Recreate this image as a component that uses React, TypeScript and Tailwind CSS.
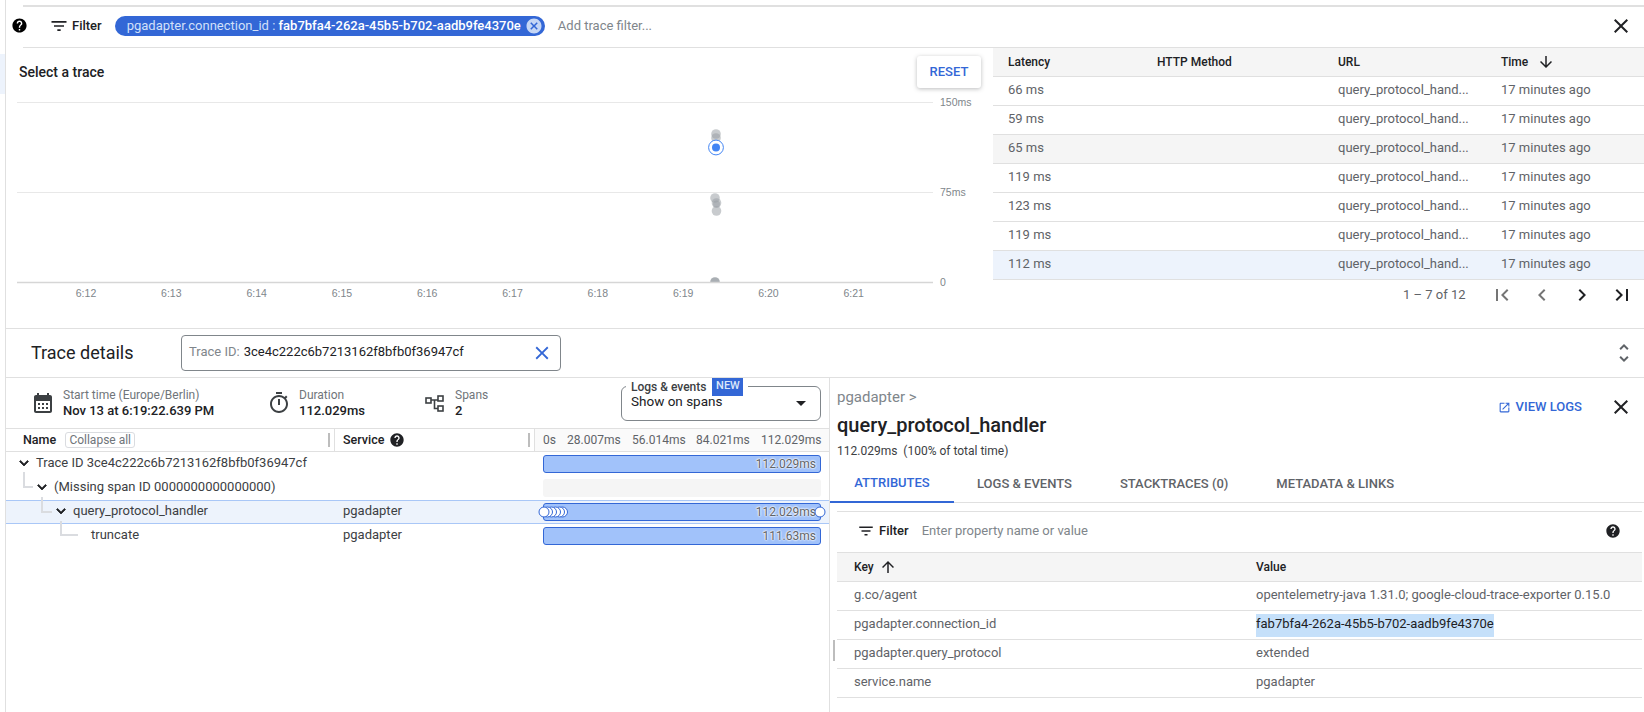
const paths = {
  help: 'M12 2C6.48 2 2 6.48 2 12s4.48 10 10 10 10-4.48 10-10S17.52 2 12 2zm1 17h-2v-2h2v2zm2.07-7.75l-.9.92C13.45 12.9 13 13.5 13 15h-2v-.5c0-1.1.45-2.1 1.17-2.83l1.24-1.26c.37-.36.59-.86.59-1.41 0-1.1-.9-2-2-2s-2 .9-2 2H8c0-2.21 1.79-4 4-4s4 1.79 4 4c0 .88-.36 1.68-.93 2.25z',
  filter: 'M10 18h4v-2h-4v2zM3 6v2h18V6H3zm3 7h12v-2H6v2z',
  close: 'M19 6.41L17.59 5 12 10.59 6.41 5 5 6.41 10.59 12 5 17.59 6.41 19 12 13.41 17.59 19 19 17.59 13.41 12z',
  cancel: 'M12 2C6.47 2 2 6.47 2 12s4.47 10 10 10 10-4.47 10-10S17.53 2 12 2zm5 13.59L15.59 17 12 13.41 8.41 17 7 15.59 10.59 12 7 8.41 8.41 7 12 10.59 15.59 7 17 8.41 13.41 12 17 15.59z',
  first: 'M18.41 16.59L13.82 12l4.59-4.59L17 6l-6 6 6 6zM6 6h2v12H6z',
  last: 'M5.59 7.41L10.18 12l-4.59 4.59L7 18l6-6-6-6zM16 6h2v12h-2z',
  prev: 'M15.41 7.41L14 6l-6 6 6 6 1.41-1.41L10.83 12z',
  next: 'M10 6L8.59 7.41 13.17 12l-4.58 4.59L10 18l6-6z',
  down: 'M20 12l-1.41-1.41L13 16.17V4h-2v12.17l-5.58-5.59L4 12l8 8 8-8z',
  up: 'M4 12l1.41 1.41L11 7.83V20h2V7.83l5.58 5.59L20 12l-8-8-8 8z',
  expand: 'M16.59 8.59L12 13.17 7.41 8.59 6 10l6 6 6-6z',
  unfold: 'M12 5.83L15.17 9l1.41-1.41L12 3 7.41 7.59 8.83 9 12 5.83zm0 12.34L8.83 15l-1.41 1.41L12 21l4.59-4.59L15.17 15 12 18.17z',
  calendar: 'M19 4h-1V2h-2v2H8V2H6v2H5c-1.11 0-1.99.9-1.99 2L3 20c0 1.1.89 2 2 2h14c1.1 0 2-.9 2-2V6c0-1.1-.9-2-2-2zm0 16H5V10h14v10zM9 14H7v-2h2v2zm4 0h-2v-2h2v2zm4 0h-2v-2h2v2zm-8 4H7v-2h2v2zm4 0h-2v-2h2v2zm4 0h-2v-2h2v2z',
  timer: 'M15 1H9v2h6V1zm-4 13h2V8h-2v6zm8.03-6.61l1.42-1.42c-.43-.51-.9-.99-1.41-1.41l-1.42 1.42C16.07 4.74 14.12 4 12 4c-4.97 0-9 4.03-9 9s4.02 9 9 9 9-4.03 9-9c0-2.12-.74-4.07-1.97-5.61zM12 20c-3.87 0-7-3.13-7-7s3.13-7 7-7 7 3.13 7 7-3.13 7-7 7z',
  open: 'M19 19H5V5h7V3H5c-1.11 0-2 .9-2 2v14c0 1.1.89 2 2 2h14c1.1 0 2-.9 2-2v-7h-2v7zM14 3v2h3.59l-9.83 9.83 1.41 1.41L19 6.41V10h2V3h-7z',
  drop: 'M7 10l5 5 5-5z',
}

const Icon = ({ name, size = 24, className = '' }: { name: keyof typeof paths; size?: number; className?: string }) => (
  <svg width={size} height={size} viewBox="0 0 24 24" fill="currentColor" className={`shrink-0 ${className}`}>
    <path d={paths[name]} />
  </svg>
)

const traces = [
  { latency: '66 ms' },
  { latency: '59 ms' },
  { latency: '65 ms', bg: 'bg-[#f5f5f5]' },
  { latency: '119 ms' },
  { latency: '123 ms' },
  { latency: '119 ms' },
  { latency: '112 ms', bg: 'bg-[#edf3fc]' },
]

const attributes = [
  { key: 'g.co/agent', value: 'opentelemetry-java 1.31.0; google-cloud-trace-exporter 0.15.0' },
  { key: 'pgadapter.connection_id', value: 'fab7bfa4-262a-45b5-b702-aadb9fe4370e', selected: true },
  { key: 'pgadapter.query_protocol', value: 'extended' },
  { key: 'service.name', value: 'pgadapter' },
]

const Chart = () => {
  const hours = ['6:12', '6:13', '6:14', '6:15', '6:16', '6:17', '6:18', '6:19', '6:20', '6:21']
  return (
    <svg width={987} height={216} className="block">
      <line x1={11} x2={927} y1={10.5} y2={10.5} stroke="#e8e8e8" />
      <line x1={11} x2={927} y1={100.5} y2={100.5} stroke="#e8e8e8" />
      <g fill="#9aa0a6" fillOpacity={0.55}>
        <circle cx={710} cy={42} r={4.8} />
        <circle cx={710} cy={46} r={4.8} />
        <circle cx={709} cy={106} r={4.8} />
        <circle cx={710.5} cy={111} r={4.8} />
        <circle cx={710.5} cy={112} r={3.5} />
        <circle cx={710.5} cy={119} r={4.8} />
        <path d="M704.2 190a4.8 4.8 0 0 1 9.6 0z" fillOpacity={0.85} />
      </g>
      <circle cx={710} cy={55.5} r={7.4} fill="#fff" stroke="#4285f4" />
      <circle cx={710} cy={55.5} r={4} fill="#4285f4" />
      <line x1={11} x2={927} y1={190.5} y2={190.5} stroke="#d6d6d6" strokeWidth={1.5} />
      <g fontFamily="Liberation Sans, sans-serif" fontSize={10.5} fill="#80868b">
        <text x={934} y={14}>150ms</text>
        <text x={934} y={103.5}>75ms</text>
        <text x={934} y={193.5}>0</text>
        {hours.map((h, i) => (
          <text key={h} x={80 + i * 85.3} y={205} textAnchor="middle">{h}</text>
        ))}
      </g>
    </svg>
  )
}

const TraceTable = () => (
  <div className="w-[651px] shrink-0">
    <div className="flex h-[29px] items-center border-b border-[#e0e0e0] bg-[#f5f5f5] text-[12px] font-medium text-[#202124]">
      <div className="w-[164px] pl-[15px]">Latency</div>
      <div className="w-[181px]">HTTP Method</div>
      <div className="w-[163px]">URL</div>
      <div className="flex items-center gap-[9px]">
        Time
        <Icon name="down" size={18} className="text-[#202124]" />
      </div>
    </div>
    {traces.map((t, i) => (
      <div key={i} className={`flex h-[29px] items-center border-b border-[#e0e0e0] pb-[2px] text-[13px] text-[#5f6368] ${t.bg ?? ''}`}>
        <div className="w-[345px] pl-[15px]">{t.latency}</div>
        <div className="w-[163px]">query_protocol_hand...</div>
        <div>17 minutes ago</div>
      </div>
    ))}
    <div className="flex h-[29px] items-center text-[13px] text-[#5f6368]">
      <div className="ml-[410px] w-[87px]">1 – 7 of 12</div>
      <Icon name="first" size={24} className="text-[#757575]" />
      <Icon name="prev" size={24} className="ml-[16px] text-[#757575]" />
      <Icon name="next" size={24} className="ml-[16px] text-[#202124]" />
      <Icon name="last" size={24} className="ml-[16px] text-[#202124]" />
    </div>
  </div>
)

const Stat = ({ label, value, width, icon }: { label: string; value: string; width: string; icon: React.ReactNode }) => (
  <div className={`flex items-center ${width}`}>
    <div className="flex w-[24px] justify-center text-[#3c4043]">{icon}</div>
    <div className="ml-[8px] leading-[15px]">
      <div className="text-[12px] text-[#70757a]">{label}</div>
      <div className="text-[13px] font-medium text-[#202124]">{value}</div>
    </div>
  </div>
)

const Handle = () => <div className="ml-auto mr-[4px] h-[14px] w-[2px] bg-[#bdbdbd]" />

const Connector = ({ className }: { className: string }) => (
  <span className={`absolute border-b-2 border-l-2 border-[#dadce0] ${className}`} />
)

const Bar = ({ label, markers, className = '' }: { label: string; markers?: boolean; className?: string }) => (
  <div className={`relative flex h-[18px] w-full items-center justify-end rounded-[3px] border border-[#3367d6] bg-[#a1c2fa] pr-[4px] text-[12px] text-[#5f6368] [text-shadow:0_0_2px_#fff,0_0_2px_#fff,0_0_2px_#fff] ${className}`}>
    {label}
    {markers && (
      <>
        <svg width={30} height={14} className="absolute left-[-6px] top-[1px]">
          {[24, 21, 17, 13, 9, 5.5].map((x) => (
            <circle key={x} cx={x + 0.5} cy={7} r={5} fill="#fff" stroke="#3367d6" />
          ))}
        </svg>
        <svg width={12} height={12} className="absolute right-[-6px] top-[2px]">
          <circle cx={6} cy={6} r={5} fill="#fff" stroke="#3367d6" />
        </svg>
      </>
    )}
  </div>
)

const SpanRow = ({
  name,
  indent,
  service,
  chevron = true,
  selected,
  connector,
  children,
}: {
  name: string
  indent: string
  service?: string
  chevron?: boolean
  selected?: boolean
  connector?: string
  children: React.ReactNode
}) => (
  <div className={`relative flex h-[24px] items-center text-[13px] text-[#3c4043] ${selected ? 'border-y border-[#a9c7f7] bg-[#edf3fc]' : ''}`}>
    {connector && <Connector className={connector} />}
    <div className={`flex w-[329px] items-center pb-[2px] ${indent}`}>
      {chevron && <Icon name="expand" size={18} className="mr-[3px] stroke-[#202124] stroke-[1px] text-[#202124]" />}
      {name}
    </div>
    <div className="w-[200px] pb-[2px] pl-[8px]">{service}</div>
    <div className="flex w-[294px] items-center px-[8px]">{children}</div>
  </div>
)

const SpanTree = () => (
  <div className="flex w-[823px] shrink-0 flex-col">
    <div className="flex h-[50px] items-center pl-[25px]">
      <Stat
        label="Start time (Europe/Berlin)"
        value="Nov 13 at 6:19:22.639 PM"
        width="w-[236px]"
        icon={<Icon name="calendar" size={24} />}
      />
      <Stat label="Duration" value="112.029ms" width="w-[156px]" icon={<Icon name="timer" size={24} />} />
      <Stat
        label="Spans"
        value="2"
        width="w-[198px]"
        icon={
          <svg width={22} height={22} viewBox="0 0 22 22" fill="none" stroke="currentColor" strokeWidth={1.6}>
            <rect x={2} y={6} width={5} height={5} />
            <rect x={14} y={4} width={5} height={5} />
            <rect x={14} y={14} width={5} height={5} />
            <path d="M7 8h7M10.5 8v8.5H14" />
          </svg>
        }
      />
      <div className="relative flex h-[35px] w-[200px] items-end rounded-[6px] border border-[#80868b] pb-[8px] pl-[9px] text-[13.5px] text-[#202124]">
        <div className="absolute left-[4px] top-[-9px] flex h-[18px] items-center bg-white px-[5px] text-[12px] font-medium text-[#3c4043]">
          Logs &amp; events
          <span className="ml-[6px] flex h-[18px] w-[31px] items-center justify-center bg-[#3367d6] text-[11px] font-medium text-[#dbe7fb]">NEW</span>
        </div>
        Show on spans
        <Icon name="drop" size={24} className="absolute right-[7px] top-[4px] text-[#202124]" />
      </div>
    </div>
    <div className="flex h-[24px] items-center border-y border-[#e0e0e0] text-[13px]">
      <div className="flex h-full w-[329px] items-center border-r border-[#e0e0e0] pl-[17px]">
        <span className="text-[12.5px] font-medium text-[#202124]">Name</span>
        <span className="ml-[9px] flex h-[16px] w-[70px] items-center justify-center rounded-[3px] border border-[#dadce0] text-[12px] text-[#70757a]">Collapse all</span>
        <Handle />
      </div>
      <div className="flex h-full w-[200px] items-center border-r border-[#e0e0e0] pl-[8px]">
        <span className="text-[12.5px] font-medium text-[#202124]">Service</span>
        <Icon name="help" size={16} className="ml-[5px] text-[#202124]" />
        <Handle />
      </div>
      <div className="flex h-full w-[294px] items-center bg-[#fafafa] pl-[8px] text-[12px] text-[#5f6368]">
        <span className="w-[24px]">0s</span>
        <span className="w-[65px]">28.007ms</span>
        <span className="w-[64px]">56.014ms</span>
        <span className="w-[65px]">84.021ms</span>
        <span>112.029ms</span>
      </div>
    </div>
    <SpanRow name="Trace ID 3ce4c222c6b7213162f8bfb0f36947cf" indent="pl-[9px]">
      <Bar label="112.029ms" />
    </SpanRow>
    <SpanRow name="(Missing span ID 0000000000000000)" indent="pl-[27px]" connector="left-[17px] top-[-4px] h-[16px] w-[10px]">
      <div className="h-[18px] w-full rounded-[3px] bg-[#f5f5f5]" />
    </SpanRow>
    <SpanRow name="query_protocol_handler" indent="pl-[46px]" service="pgadapter" selected connector="left-[35px] top-[-4px] h-[16px] w-[11px]">
      <Bar label="112.029ms" markers />
    </SpanRow>
    <SpanRow name="truncate" indent="pl-[85px]" service="pgadapter" chevron={false} connector="left-[54px] top-[-3px] h-[15px] w-[18px]">
      <Bar label="111.63ms" className="w-[277px]" />
    </SpanRow>
  </div>
)

const SpanDetails = () => (
  <div className="relative flex-1 border-l border-[#e0e0e0]">
    <div className="absolute left-[3px] top-[262px] h-[21px] w-[2px] bg-[#bdbdbd]" />
    <div className="flex h-[81px] items-start justify-between pl-[7px]">
      <div>
        <div className="mt-[9px] h-[20px] text-[15px] leading-[20px] text-[#80868b]">pgadapter &gt;</div>
        <div className="mt-[4px] h-[28px] text-[20px] font-medium leading-[28px] text-[#202124]">query_protocol_handler</div>
        <div className="mt-[4px] h-[16px] text-[12px] leading-[16px] text-[#3c4043]">112.029ms&nbsp; (100% of total time)</div>
      </div>
      <div className="mt-[17px] flex items-center pr-[11px] text-[#3367d6]">
        <Icon name="open" size={13} />
        <span className="ml-[5px] text-[13px] font-medium">VIEW LOGS</span>
        <Icon name="close" size={24} className="ml-[27px] text-[#202124]" />
      </div>
    </div>
    <div className="mt-[6px] flex h-[38px] border-b border-[#e0e0e0] text-[13px] font-medium text-[#5f6368]">
      <div className="flex h-[38px] w-[124px] items-center justify-center border-b-2 border-[#3367d6] text-[#3367d6]">ATTRIBUTES</div>
      <div className="ml-[23px] flex items-center">LOGS &amp; EVENTS</div>
      <div className="ml-[48px] flex items-center">STACKTRACES (0)</div>
      <div className="ml-[48px] flex items-center">METADATA &amp; LINKS</div>
    </div>
    <div className="ml-[7px] mr-[2px] mt-[8px] flex h-[41px] items-center border-t border-[#e0e0e0] pb-[2px] pl-[20px] text-[13px]">
      <Icon name="filter" size={18} className="text-[#202124]" />
      <span className="ml-[4px] font-medium text-[#202124]">Filter</span>
      <span className="ml-[13px] text-[#80868b]">Enter property name or value</span>
      <Icon name="help" size={16} className="ml-auto mr-[21px] text-[#202124]" />
    </div>
    <div className="ml-[7px] mr-[2px] border-t border-[#e0e0e0]">
      <div className="flex h-[29px] items-center border-b border-[#e0e0e0] bg-[#f5f5f5] text-[12px] font-medium text-[#202124]">
        <div className="flex w-[419px] items-center gap-[5px] pl-[17px]">
          Key
          <Icon name="up" size={18} />
        </div>
        <div>Value</div>
      </div>
      {attributes.map((a) => (
        <div key={a.key} className="flex h-[29px] items-center border-b border-[#e0e0e0] text-[13px] text-[#5f6368]">
          <div className="w-[419px] pb-[2px] pl-[17px]">{a.key}</div>
          {a.selected ? (
            <span className="flex h-[23px] items-center bg-[#c5e0fa] pb-[2px] text-[#202124]">{a.value}</span>
          ) : (
            <div className="pb-[2px]">{a.value}</div>
          )}
        </div>
      ))}
    </div>
  </div>
)

export default function App() {
  return (
    <div className="flex h-[712px] w-[1644px] overflow-hidden bg-white [font-family:Roboto,sans-serif]">
      <div className="w-[6px] shrink-0 border-r border-[#e0e0e0]">
        <div className="mt-[54px] h-[40px] w-[5px] bg-[#edf3fc]" />
      </div>
      <div className="flex min-w-0 flex-1 flex-col">
        <div className="ml-[17px] mt-[5px] h-[2px] shrink-0 bg-[#e0e0e0]" />
        <div className="flex h-[41px] shrink-0">
          <div className="flex w-[17px] items-center justify-center pb-[4px] pl-[9px]">
            <Icon name="help" size={17} className="text-black" />
          </div>
          <div className="flex flex-1 items-center border-b border-[#e0e0e0] pb-[3px] text-[13px]">
            <Icon name="filter" size={20} className="ml-[26px] text-[#202124]" />
            <span className="ml-[3px] font-medium text-[#202124]">Filter</span>
            <div className="ml-[13px] flex h-[20px] items-center rounded-full bg-[#3367d6] pl-[12px] pr-[2px] text-[13px] text-[#d2e0f9]">
              pgadapter.connection_id :&nbsp;
              <span className="font-medium text-white">fab7bfa4-262a-45b5-b702-aadb9fe4370e</span>
              <Icon name="cancel" size={18} className="ml-[4px] text-[#c5d6f5]" />
            </div>
            <span className="ml-[13px] text-[#80868b]">Add trace filter...</span>
            <Icon name="close" size={24} className="ml-auto mr-[11px] text-[#202124]" />
          </div>
        </div>
        <div className="flex h-[281px] shrink-0 border-b border-[#e0e0e0]">
          <div className="min-w-0 flex-1">
            <div className="flex h-[44px] items-start justify-between pl-[13px] pr-[12px]">
              <div className="mt-[14px] text-[14px] font-medium text-[#202124]">Select a trace</div>
              <div className="mt-[8px] flex h-[32px] w-[64px] items-center justify-center rounded-[3px] bg-white text-[13px] font-medium text-[#3367d6] shadow-[0_1px_4px_rgba(60,64,67,0.35)]">RESET</div>
            </div>
            <Chart />
          </div>
          <TraceTable />
        </div>
        <div className="flex h-[49px] shrink-0 items-center border-b border-[#e0e0e0]">
          <div className="w-[175px] pb-[2px] pl-[25px] text-[18px] text-[#202124]">Trace details</div>
          <div className="flex h-[36px] w-[380px] items-center rounded-[4px] border border-[#80868b] pb-[2px] pl-[7px] text-[13px]">
            <span className="text-[#80868b]">Trace ID:</span>
            <span className="ml-[4px] text-[#202124]">3ce4c222c6b7213162f8bfb0f36947cf</span>
            <Icon name="close" size={22} className="ml-auto mr-[7px] mt-[2px] text-[#3367d6]" />
          </div>
          <Icon name="unfold" size={24} className="ml-auto mr-[8px] text-[#5f6368]" />
        </div>
        <div className="flex min-h-0 flex-1">
          <SpanTree />
          <SpanDetails />
        </div>
      </div>
    </div>
  )
}
